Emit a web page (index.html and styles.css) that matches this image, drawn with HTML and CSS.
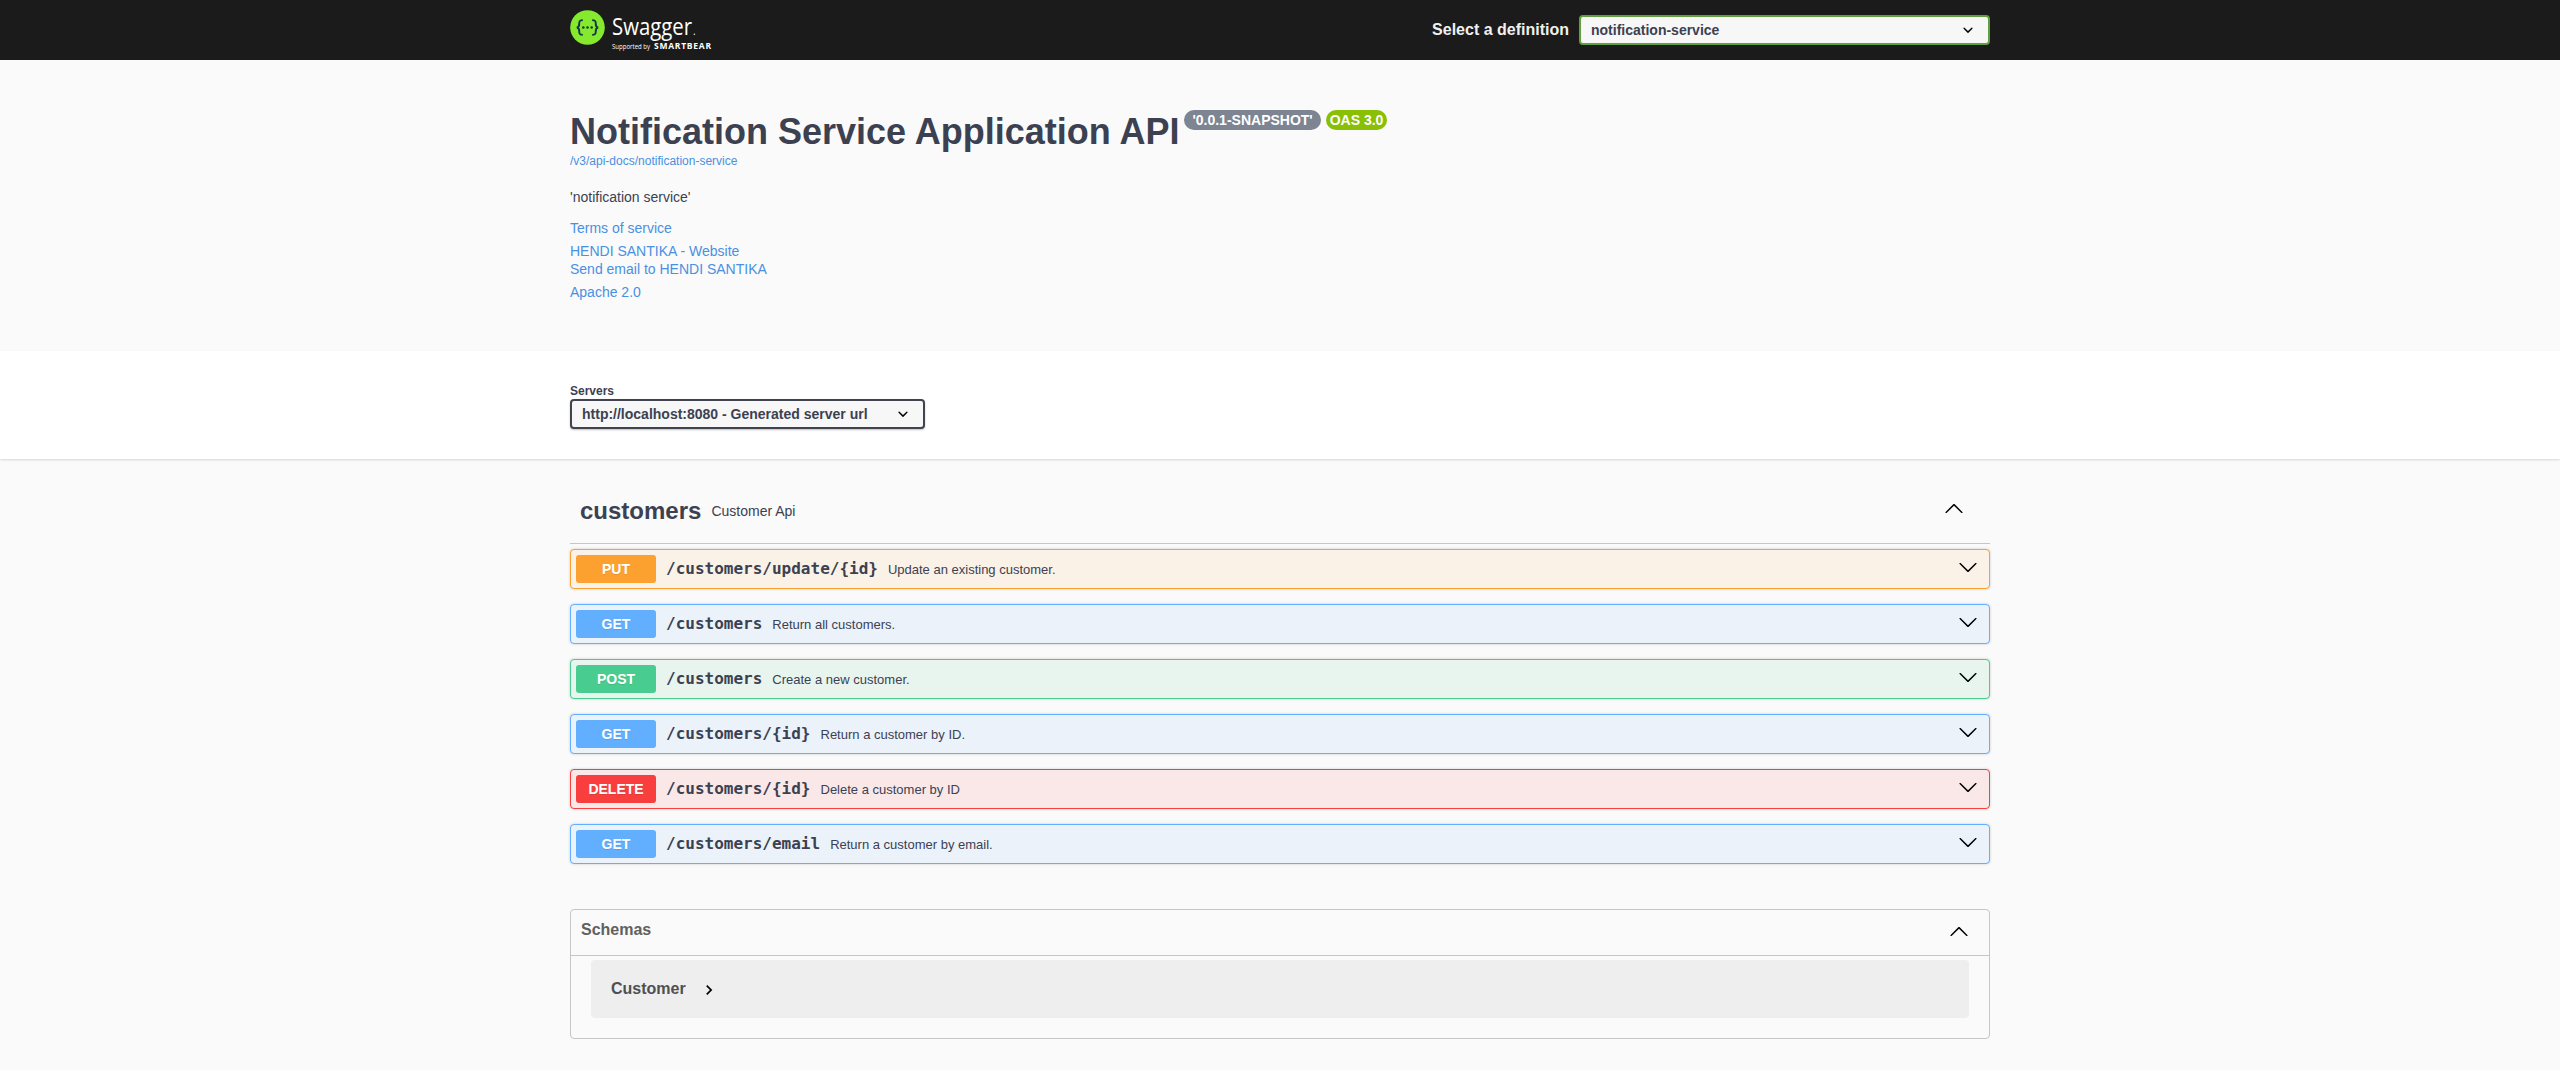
FILE: index.html
```html
<!DOCTYPE html>
<html lang="en">
<head>
<meta charset="utf-8">
<title>Swagger UI</title>
<link rel="stylesheet" href="styles.css">
</head>
<body>
<svg class="sprite" aria-hidden="true">
  <symbol id="arrow-down" viewBox="0 0 20 20"><path d="M17.418 6.109c.272-.268.709-.268.979 0s.271.701 0 .969l-7.908 7.83c-.27.268-.707.268-.979 0l-7.908-7.83c-.27-.268-.27-.701 0-.969s.709-.268.979 0L10 13.25z"/></symbol>
  <symbol id="arrow-up" viewBox="0 0 20 20"><path d="M17.418 14.908c.272.268.709.268.979 0s.271-.701 0-.969l-7.908-7.83c-.27-.268-.707-.268-.979 0l-7.908 7.83c-.27.268-.27.701 0 .969s.709.268.979 0L10 7.767z"/></symbol>
  <symbol id="select-arrow" viewBox="0 0 20 20"><path d="M13.418 7.859a.695.695 0 0 1 .978 0 .68.68 0 0 1 0 .969l-3.908 3.83a.697.697 0 0 1-.979 0l-3.908-3.83a.68.68 0 0 1 0-.969.695.695 0 0 1 .978 0L10 11z"/></symbol>
</svg>

<header class="topbar">
  <div class="wrapper topbar-row">
    <a class="logo">
      <svg class="logo-mark" viewBox="0 0 36 36">
        <circle cx="18" cy="18" r="17.8" fill="#85ea2d"/>
        <g fill="none" stroke="#173647" stroke-width="2">
          <path d="M13.2 10.4c-3 0-3.7.9-3.7 3.2 0 2.5.2 4-2.5 4.4 2.700.4 2.5 1.9 2.5 4.4 0 2.3.7 3.2 3.7 3.2"/>
          <path d="M22.8 10.4c3 0 3.7.9 3.7 3.2 0 2.5-.2 4 2.5 4.4-2.7.4-2.5 1.9-2.5 4.4 0 2.3-.7 3.2-3.7 3.2"/>
        </g>
        <g fill="#173647"><circle cx="13.7" cy="18" r="1.3"/><circle cx="18" cy="18" r="1.3"/><circle cx="22.3" cy="18" r="1.3"/></g>
      </svg>
      <svg class="logo-text" viewBox="0 0 104 44">
        <text class="brand" x="1" y="25" textLength="80" lengthAdjust="spacingAndGlyphs">Swagger</text>
        <text class="mark" x="82" y="25">.</text>
        <text class="supported" x="1" y="39" textLength="38" lengthAdjust="spacingAndGlyphs">Supported by</text>
        <text class="smartbear" x="43" y="39" textLength="57">SMARTBEAR</text>
      </svg>
    </a>
    <div class="definition">
      <span>Select a definition</span>
      <div class="select select-definition">notification-service<svg><use href="#select-arrow"/></svg></div>
    </div>
  </div>
</header>

<section class="wrapper info">
  <h1>Notification Service Application API<span class="versions"><span class="version">'0.0.1-SNAPSHOT'</span><span class="version oas">OAS 3.0</span></span></h1>
  <a class="spec-link">/v3/api-docs/notification-service</a>
  <p class="description">'notification service'</p>
  <div class="links">
    <a>Terms of service</a>
    <div class="contact"><a>HENDI SANTIKA - Website</a><a>Send email to HENDI SANTIKA</a></div>
    <a>Apache 2.0</a>
  </div>
</section>

<section class="scheme">
  <div class="wrapper">
    <div class="servers-title">Servers</div>
    <div class="select select-server">http://localhost:8080 - Generated server url<svg><use href="#select-arrow"/></svg></div>
  </div>
</section>

<main class="wrapper">
  <div class="tag">
    <h2>customers</h2><span>Customer Api</span><svg class="arrow"><use href="#arrow-up"/></svg>
  </div>
  <div class="operations">
    <div class="op put"><b class="method">PUT</b><code>/customers/update/{id}</code><span>Update an existing customer.</span><svg class="arrow"><use href="#arrow-down"/></svg></div>
    <div class="op get"><b class="method">GET</b><code>/customers</code><span>Return all customers.</span><svg class="arrow"><use href="#arrow-down"/></svg></div>
    <div class="op post"><b class="method">POST</b><code>/customers</code><span>Create a new customer.</span><svg class="arrow"><use href="#arrow-down"/></svg></div>
    <div class="op get"><b class="method">GET</b><code>/customers/{id}</code><span>Return a customer by ID.</span><svg class="arrow"><use href="#arrow-down"/></svg></div>
    <div class="op delete"><b class="method">DELETE</b><code>/customers/{id}</code><span>Delete a customer by ID</span><svg class="arrow"><use href="#arrow-down"/></svg></div>
    <div class="op get"><b class="method">GET</b><code>/customers/email</code><span>Return a customer by email.</span><svg class="arrow"><use href="#arrow-down"/></svg></div>
  </div>
  <section class="models">
    <h4>Schemas<svg class="arrow"><use href="#arrow-up"/></svg></h4>
    <div class="model">Customer<svg viewBox="0 0 24 24"><path d="M10 6L8.59 7.41 13.17 12l-4.58 4.59L10 18l6-6z"/></svg></div>
  </section>
</main>
</body>
</html>
```

FILE: styles.css
```css
* { box-sizing: border-box; }
body {
  margin: 0;
  background: #fafafa;
  color: #3b4151;
  font-family: "Liberation Sans", Arial, sans-serif;
}
h1, h2, h4, p { margin: 0; }
.sprite { display: none; }
.wrapper { width: 1460px; margin: 0 auto; padding: 0 20px; }
.arrow { width: 20px; height: 20px; fill: #000; margin-left: auto; }

/* Top bar */
.topbar { height: 60px; background: #1b1b1b; }
.topbar-row { display: flex; justify-content: space-between; height: 60px; }
.logo { display: flex; padding-top: 10px; }
.logo-mark { width: 35px; height: 35px; }
.logo-text { width: 104px; height: 44px; margin-left: 6px; fill: #fff; }
.brand { font: 400 23px "Open Sans", sans-serif; }
.mark { font: 10px "Open Sans", sans-serif; }
.supported { font: 6.5px "Open Sans", sans-serif; }
.smartbear { font: 700 8.5px "Open Sans", sans-serif; }
.definition {
  display: flex;
  align-items: center;
  gap: 10px;
  color: #f0f0f0;
  font-size: 16px;
  font-weight: 700;
}
.select {
  display: flex;
  align-items: center;
  justify-content: space-between;
  height: 30px;
  padding: 0 10px;
  border: 2px solid #41444e;
  border-radius: 4px;
  background: #f7f7f7;
  color: #3b4151;
  font-size: 14px;
  font-weight: 700;
}
.select svg { width: 20px; height: 20px; }
.select-definition { width: 411px; border-color: #62a03f; }

/* API information */
.info { height: 291px; padding-top: 50px; }
.info h1 { display: flex; height: 43px; font-size: 36px; line-height: 43px; white-space: nowrap; }
.versions { display: flex; gap: 5px; margin: 0 0 0 5px; }
.version {
  height: 20px;
  padding: 0 8px;
  border-radius: 20px;
  background: #7d8492;
  color: #fff;
  font-size: 14px;
  line-height: 20px;
}
.version.oas { background: #89bf04; padding: 0 4px; }
.info a { display: block; color: #4990e2; }
.spec-link { font-size: 12px; line-height: 17px; }
.description { margin-top: 18px; font-size: 14px; line-height: 18px; }
.links { display: flex; flex-direction: column; gap: 5px; margin-top: 13px; font-size: 14px; line-height: 18px; }

/* Server picker */
.scheme { height: 108px; padding-top: 33px; background: #fff; box-shadow: 0 1px 2px rgba(0, 0, 0, .15); }
.servers-title { height: 15px; font-size: 12px; font-weight: 700; line-height: 14px; }
.select-server { width: 355px; box-shadow: 0 1px 2px rgba(0, 0, 0, .25); }

/* Operations */
.tag {
  display: flex;
  align-items: center;
  height: 55px;
  margin-top: 30px;
  padding: 0 26px 11px 10px;
  border-bottom: 1px solid #c4c6ca;
}
.tag h2 { font-size: 24px; line-height: 28px; }
.tag span { margin-left: 10px; font-size: 14px; }
.tag .arrow { margin-top: -5px; }
.operations { display: flex; flex-direction: column; gap: 15px; margin-top: 5px; }
.op {
  display: flex;
  align-items: center;
  height: 40px;
  padding: 0 11px 0 5px;
  border: 1px solid;
  border-radius: 4px;
  box-shadow: 0 0 3px rgba(0, 0, 0, .19);
}
.method {
  width: 80px;
  height: 28px;
  border-radius: 3px;
  color: #fff;
  font-size: 14px;
  line-height: 28px;
  text-align: center;
  text-shadow: 0 1px 0 rgba(0, 0, 0, .1);
}
.op code { margin-left: 10px; font: 700 16px/20px "DejaVu Sans Mono", monospace; }
.op span { margin-left: 10px; font-size: 13px; }
.op .arrow { margin-top: -4px; }
.put { border-color: #fca130; background: #faf1e7; }
.put .method { background: #fca130; }
.get { border-color: #61affe; background: #ebf2fa; }
.get .method { background: #61affe; }
.post { border-color: #49cc90; background: #e8f5ef; }
.post .method { background: #49cc90; }
.delete { border-color: #f93e3e; background: #fae8e8; }
.delete .method { background: #f93e3e; }

/* Schemas */
.models { height: 130px; margin-top: 45px; border: 1px solid #c4c6ca; border-radius: 4px; }
.models h4 {
  display: flex;
  align-items: center;
  height: 46px;
  padding: 0 20px 5px 10px;
  border-bottom: 1px solid #c4c6ca;
  color: #606060;
  font-size: 16px;
}
.models .arrow { margin-top: 1px; }
.model {
  display: flex;
  align-items: center;
  height: 58px;
  margin: 4px 20px 0;
  padding: 0 20px;
  border-radius: 4px;
  background: #eee;
  color: #505050;
  font-size: 16px;
  font-weight: 700;
}
.model svg { width: 20px; height: 20px; margin: 2px 0 0 13px; fill: #000; }
```
